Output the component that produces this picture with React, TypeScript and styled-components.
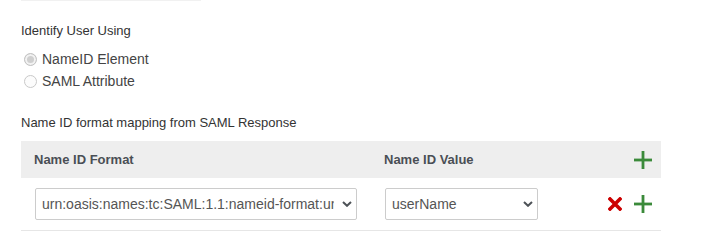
import React from "react";
import styled, { createGlobalStyle } from "styled-components";

const GlobalStyle = createGlobalStyle`
  html, body { margin: 0; padding: 0; background: #fff; }
  body { font-family: "Liberation Sans", Arial, sans-serif; }
`;

const Page = styled.div`
  padding: 0 0 0 21px;
  width: 640px;
`;

const TopRule = styled.div`
  width: 180px;
  height: 1px;
  background: #f1f1f1;
`;

const SectionLabel = styled.div<{ $top: number }>`
  margin-top: ${(p) => p.$top}px;
  font-size: 13px;
  line-height: 15px;
  color: #333;
`;

const RadioGroup = styled.div`
  margin-top: 10px;
  display: flex;
  flex-direction: column;
`;

const RadioRow = styled.label`
  display: flex;
  align-items: center;
  height: 22px;
  font-size: 14px;
  line-height: 16px;
  color: #444;
`;

const RadioInput = styled.input`
  appearance: none;
  box-sizing: border-box;
  width: 13px;
  height: 13px;
  margin: 0 5px 0 3px;
  border: 1px solid #c9c9c9;
  border-radius: 50%;
  background: #fcfcfc;
  &:checked {
    border-color: #c3c3c3;
    background: #cfcfcf;
    box-shadow: inset 0 0 0 2px #f2f2f2;
  }
`;

const Table = styled.div`
  margin-top: 11px;
  width: 640px;
`;

const HeaderRow = styled.div`
  display: grid;
  grid-template-columns: 350px 1fr auto;
  align-items: center;
  height: 37px;
  background: #eeeeee;
`;

const HeaderCell = styled.div`
  padding-left: 13px;
  font-size: 13px;
  line-height: 15px;
  font-weight: bold;
  color: #4a4f55;
`;

const ActionCell = styled.div`
  display: flex;
  align-items: center;
  gap: 12px;
  padding-right: 9px;
  justify-content: flex-end;
`;

const BodyRow = styled.div`
  display: grid;
  grid-template-columns: 350px 1fr auto;
  align-items: center;
  padding: 10px 0;
  border-bottom: 1px solid #e6e6e6;
`;

const BodyCell = styled.div`
  padding-left: 14px;
`;

const SelectWrap = styled.div<{ $w: number }>`
  position: relative;
  width: ${(p) => p.$w}px;
  height: 32px;
`;

const Select = styled.select`
  appearance: none;
  box-sizing: border-box;
  width: 100%;
  height: 32px;
  margin: 0;
  padding: 0 22px 0 6px;
  border: 1px solid #cccccc;
  border-radius: 2px;
  background: #fff;
  font-family: "Liberation Sans", Arial, sans-serif;
  font-size: 14px;
  color: #555;
  outline: none;
`;

const Chevron = styled.svg`
  position: absolute;
  right: 5px;
  top: 13px;
  width: 10px;
  height: 6px;
  pointer-events: none;
`;

const IconSvg = styled.svg`
  display: block;
`;

const PlusIcon = () => (
  <IconSvg width="18" height="18" viewBox="0 0 18 18">
    <rect x="0" y="7.6" width="18" height="2.8" fill="#3b8a3a" />
    <rect x="7.6" y="0" width="2.8" height="18" fill="#3b8a3a" />
  </IconSvg>
);

const CrossIcon = () => (
  <IconSvg width="14" height="14" viewBox="0 0 14 14">
    <path d="M2 2 L12 12 M12 2 L2 12" stroke="#cc0000" strokeWidth="3.6" strokeLinecap="square" />
  </IconSvg>
);

const ChevronIcon = () => (
  <Chevron viewBox="0 0 10 6">
    <polyline points="1,1 5,4.8 9,1" fill="none" stroke="#4d5257" strokeWidth="2" />
  </Chevron>
);

export default function App() {
  return (
    <>
      <GlobalStyle />
      <Page>
        <TopRule />
        <SectionLabel $top={22}>Identify User Using</SectionLabel>
        <RadioGroup>
          <RadioRow>
            <RadioInput type="radio" name="idu" defaultChecked disabled />
            NameID Element
          </RadioRow>
          <RadioRow>
            <RadioInput type="radio" name="idu" disabled />
            SAML Attribute
          </RadioRow>
        </RadioGroup>
        <SectionLabel $top={23}>Name ID format mapping from SAML Response</SectionLabel>
        <Table>
          <HeaderRow>
            <HeaderCell>Name ID Format</HeaderCell>
            <HeaderCell>Name ID Value</HeaderCell>
            <ActionCell>
              <PlusIcon />
            </ActionCell>
          </HeaderRow>
          <BodyRow>
            <BodyCell>
              <SelectWrap $w={322}>
                <Select defaultValue="unspecified">
                  <option value="unspecified">urn:oasis:names:tc:SAML:1.1:nameid-format:unspecified</option>
                </Select>
                <ChevronIcon />
              </SelectWrap>
            </BodyCell>
            <BodyCell>
              <SelectWrap $w={153}>
                <Select defaultValue="userName">
                  <option value="userName">userName</option>
                </Select>
                <ChevronIcon />
              </SelectWrap>
            </BodyCell>
            <ActionCell>
              <CrossIcon />
              <PlusIcon />
            </ActionCell>
          </BodyRow>
        </Table>
      </Page>
    </>
  );
}
